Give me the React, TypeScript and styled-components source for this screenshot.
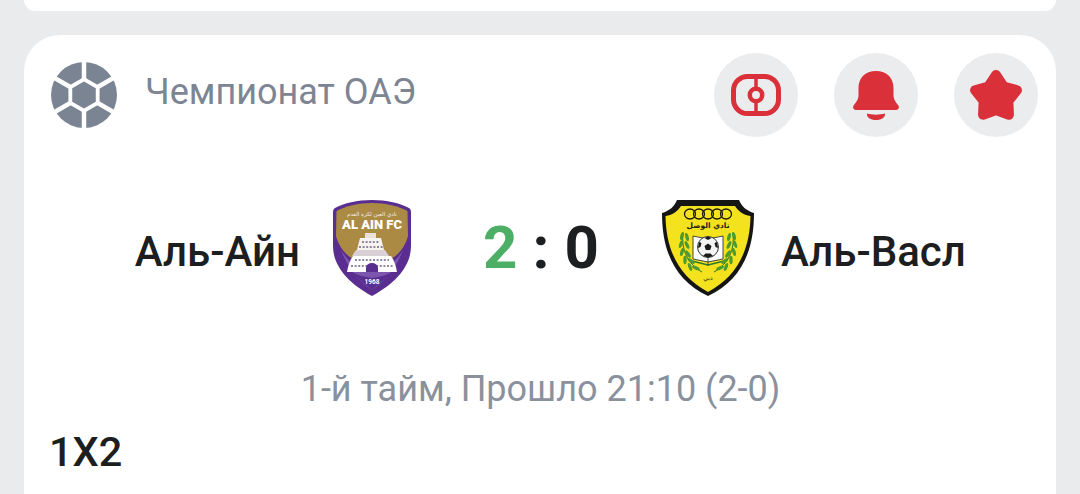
import React from "react";
import styled, { createGlobalStyle } from "styled-components";

const Global = createGlobalStyle`
  html, body { margin: 0; padding: 0; background: #eaebed; }
  body { font-family: Roboto, "Liberation Sans", sans-serif; overflow: hidden; }
`;

const Page = styled.div`
  width: 1080px;
  height: 494px;
  overflow: hidden;
  padding: 0 24px;
  box-sizing: border-box;
  display: flex;
  flex-direction: column;
  gap: 24px;
`;

const TopCard = styled.div`
  height: 11px;
  flex: none;
  background: #fff;
  border-radius: 0 0 36px 36px;
`;

const Card = styled.section`
  flex: none;
  height: 480px;
  background: #fff;
  border-radius: 36px 36px 0 0;
  padding: 18px 18px 0 26px;
  box-sizing: border-box;
`;

const Header = styled.header`
  display: flex;
  align-items: center;
  height: 84px;
`;

const BallIcon = styled.svg`
  width: 66px;
  height: 66px;
  flex: none;
  margin-left: 1px;
`;

const League = styled.div`
  margin: -6px 0 0 28px;
  font-size: 36px;
  line-height: 40px;
  color: #7d8593;
  flex: 1;
`;

const Actions = styled.div`
  display: flex;
  gap: 36px;
`;

const RoundButton = styled.button`
  width: 84px;
  height: 84px;
  padding: 0;
  border: 0;
  border-radius: 50%;
  background: #ebecee;
  display: flex;
  align-items: center;
  justify-content: center;
`;

const ActionIcon = styled.svg`
  width: 60px;
  height: 60px;
  display: block;
`;

const Match = styled.div`
  display: grid;
  grid-template-columns: 459px 116px 1fr;
  align-items: center;
  height: 96px;
  margin: 63px -18px 0 -26px;
`;

const Team = styled.div<{ $side: "home" | "away" }>`
  display: flex;
  align-items: center;
  justify-content: ${(p) => (p.$side === "home" ? "flex-end" : "flex-start")};
  gap: ${(p) => (p.$side === "home" ? "33px" : "27px")};
  padding: ${(p) => (p.$side === "home" ? "0 72px 0 0" : "0 0 0 63px")};
`;

const TeamName = styled.span`
  margin-top: 7px;
  font-size: 42px;
  line-height: 44px;
  font-weight: 500;
  color: #1d1e20;
  white-space: nowrap;
`;

const Crest = styled.svg`
  height: 96px;
  flex: none;
  display: block;
`;

const Score = styled.div`
  display: flex;
  justify-content: space-between;
  align-items: center;
  font-size: 60px;
  line-height: 60px;
  font-weight: 700;
  color: #1d1e20;
  white-space: nowrap;
`;

const Goals = styled.span<{ $lead?: boolean }>`
  color: ${(p) => (p.$lead ? "#4caf65" : "#1d1e20")};
`;

const Status = styled.div`
  margin: 73px 7px 0 0;
  text-align: center;
  font-size: 36px;
  line-height: 40px;
  color: #8a919d;
  white-space: nowrap;
`;

const Market = styled.div`
  margin: 21px 0 0 -1px;
  font-size: 41.500px;
  line-height: 44px;
  font-weight: 500;
  color: #1d1e20;
`;

const angles = [90, 30, -30, -90, -150, 150];
const pt = (r: number, a: number) =>
  `${33 + r * Math.cos((a * Math.PI) / 180)},${33 - r * Math.sin((a * Math.PI) / 180)}`;
const hex = (r: number) => angles.map((a) => pt(r, a)).join(" ");

const Ball = () => (
  <BallIcon viewBox="0 0 66 66">
    <circle cx="33" cy="33" r="33" fill="#7a8493" />
    <polygon points={hex(18)} fill="#fff" />
    {angles.map((a) => (
      <line key={a} x1="33" y1="33" x2={33 + 40 * Math.cos((a * Math.PI) / 180)} y2={33 - 40 * Math.sin((a * Math.PI) / 180)} stroke="#fff" strokeWidth="4.5" />
    ))}
    <polygon points={hex(13.6)} fill="#7a8493" />
  </BallIcon>
);

const RED = "#d9303a";

const Field = () => (
  <ActionIcon viewBox="0 0 60 60">
    <rect x="7.5" y="11.5" width="45" height="37" rx="14" fill="none" stroke={RED} strokeWidth="5" />
    <line x1="30" y1="11" x2="30" y2="49" stroke={RED} strokeWidth="3.500" />
    <circle cx="30" cy="30" r="6.200" fill="#ebecee" stroke={RED} strokeWidth="4.500" />
  </ActionIcon>
);

const Bell = () => (
  <ActionIcon viewBox="0 0 60 60">
    <path d="M30 6 C19 6 12.500 13 12.500 23 L12.500 30 C12.500 35 10 37 8 40 C6 42.500 7.500 45 10.500 45 L49.500 45 C52.500 45 54 42.500 52 40 C50 37 47.500 35 47.500 30 L47.500 23 C47.500 13 41 6 30 6Z" fill={RED} />
    <path d="M21 48.500 C26 50 34 50 39 48.500 C39.500 52.500 35.500 55 30 55 C24.500 55 20.500 52.500 21 48.500Z" fill={RED} />
  </ActionIcon>
);

const starPts = Array.from({ length: 10 }, (_, i) => {
  const r = i % 2 === 0 ? 22 : 13;
  const a = (-90 + i * 36) * (Math.PI / 180);
  return `${30 + r * Math.cos(a)},${32 + r * Math.sin(a)}`;
}).join(" ");

const Star = () => (
  <ActionIcon viewBox="0 0 60 60">
    <polygon points={starPts} fill={RED} stroke={RED} strokeWidth="10" strokeLinejoin="round" />
  </ActionIcon>
);

const AlAin = () => (
  <Crest viewBox="0 0 78 96" width="78">
    <path d="M39 0 C54 0 67 3 76 8 C78 9 78 11 78 13 L78 46 C78 70 56 87 39 96 C22 87 0 70 0 46 L0 13 C0 11 0 9 2 8 C11 3 24 0 39 0Z" fill="#5a2e90" />
    <path d="M39 3 C53 3 65 6 74.500 11 L75 36 C72 48 62 60 50 62 L28 62 C16 60 6 48 3 36 L3.500 11 C13 6 25 3 39 3Z" fill="#ab8a44" />
    <path d="M8 50 C14 66 24 80 39 90 C54 80 64 66 70 50 C64 60 56 68 39 72 C22 68 14 60 8 50Z" fill="#7c55ae" />
    <path d="M18 72 L39 90 L60 72 L50 76 L39 78 L28 76Z" fill="#5a2e90" />
    <text x="39" y="15.500" textAnchor="middle" fontFamily="'DejaVu Sans', sans-serif" fontSize="5.500" fill="#f3eee0">نادي العين لكرة القدم</text>
    <text x="39" y="28.500" textAnchor="middle" fontFamily="Roboto, sans-serif" fontSize="13" fontWeight="900" fill="#fff">AL AIN FC</text>
    <rect x="32" y="33" width="11" height="5" fill="#e8e3da" />
    <path d="M27 38 L48 38 L51 50 L24 50Z" fill="#f6f4f0" />
    <path d="M23 50 L52 50 L56 56 L19 56Z" fill="#d8d0d4" />
    <path d="M20 56 L58 56 C61 60 63 66 64 72 L14 72 C15 66 17 60 20 56Z" fill="#fff" />
    <path d="M29 42 h18 M26 47 h24 M22 60 h34 M18 66 h42" stroke="#6d6085" strokeWidth="1.300" strokeDasharray="2 1.600" />
    <path d="M33 72 v-4 a6 5 0 0 1 12 0 v4Z" fill="#5a2e90" />
    <text x="39" y="84" textAnchor="middle" fontFamily="Roboto, sans-serif" fontSize="6.500" fontWeight="700" fill="#fff">1968</text>
  </Crest>
);

const Leaf = ({ x, y, r }: { x: number; y: number; r: number }) => (
  <ellipse cx={x} cy={y} rx="1.700" ry="4.200" transform={`rotate(${r} ${x} ${y})`} fill="#4d9a2f" />
);

const wreath = [
  [20, 36, 15], [25, 37, -15], [19, 44, 20], [25, 45, -25], [20, 52, 15], [26, 54, -35], [23, 60, 0], [29, 61, -50], [28, 67, -20], [34, 68, -65],
];

const AlWasl = () => (
  <Crest viewBox="0 0 92 96" width="92">
    <path d="M15 0 L77 0 C80 7 85 11 92 13 C92 50 80 80 46 96 C12 80 0 50 0 13 C7 11 12 7 15 0Z" fill="#151515" />
    <path d="M19 6 L73 6 C76 11 81 15 88.500 16 C88 49 76 76 46 92 C16 76 4 49 3.500 16 C11 15 16 11 19 6Z" fill="#f5e21e" />
    {[28, 37, 46, 55, 64].map((x) => (
      <ellipse key={x} cx={x} cy="14" rx="5.500" ry="5" fill="none" stroke="#1a1a10" strokeWidth="1.300" />
    ))}
    <text x="46" y="28" textAnchor="middle" fontFamily="'DejaVu Sans', sans-serif" fontSize="7.500" fontWeight="700" fill="#23230f">نادي الوصل</text>
    <path d="M31 36 L46 39 L61 36 L61 59 L46 62 L31 59Z" fill="#fff" stroke="#333" strokeWidth="0.900" />
    <path d="M30 61 L46 65 L62 61" fill="none" stroke="#2e7a2a" strokeWidth="1.300" />
    <line x1="46" y1="58" x2="46" y2="66" stroke="#333" strokeWidth="0.800" />
    <circle cx="46" cy="47" r="10.500" fill="#f4f4f4" stroke="#222" strokeWidth="0.900" />
    <polygon points="46,43.500 49.500,46 48.200,50 43.800,50 42.500,46" fill="#1a1a1a" />
    <path d="M46 36.500 L42.500 38 L46 40 L49.500 38Z M37 42 L36 48 L38.500 47 L39.500 43Z M55 42 L56 48 L53.500 47 L52.500 43Z M41 56 L43.500 53.500 L48.500 53.500 L51 56 L46 57.500Z" fill="#1a1a1a" />
    <path d="M21 33 C19 50 26 64 40 72" fill="none" stroke="#2f6a22" strokeWidth="1" />
    <path d="M71 33 C73 50 66 64 52 72" fill="none" stroke="#2f6a22" strokeWidth="1" />
    {wreath.map(([x, y, r], i) => <Leaf key={i} x={x} y={y} r={r} />)}
    {wreath.map(([x, y, r], i) => <Leaf key={`r${i}`} x={92 - x} y={y} r={-r} />)}
    <text x="46" y="80" textAnchor="middle" fontFamily="'DejaVu Sans', sans-serif" fontSize="6" fill="#2a2a10">دبي</text>
  </Crest>
);

export default function App() {
  return (
    <Page>
      <Global />
      <TopCard />
      <Card>
        <Header>
          <Ball />
          <League>Чемпионат ОАЭ</League>
          <Actions>
            <RoundButton><Field /></RoundButton>
            <RoundButton><Bell /></RoundButton>
            <RoundButton><Star /></RoundButton>
          </Actions>
        </Header>
        <Match>
          <Team $side="home">
            <TeamName>Аль-Айн</TeamName>
            <AlAin />
          </Team>
          <Score>
            <Goals $lead>2</Goals>
            <span>:</span>
            <Goals>0</Goals>
          </Score>
          <Team $side="away">
            <AlWasl />
            <TeamName>Аль-Васл</TeamName>
          </Team>
        </Match>
        <Status>1-й тайм, Прошло 21:10 (2-0)</Status>
        <Market>1X2</Market>
      </Card>
    </Page>
  );
}
